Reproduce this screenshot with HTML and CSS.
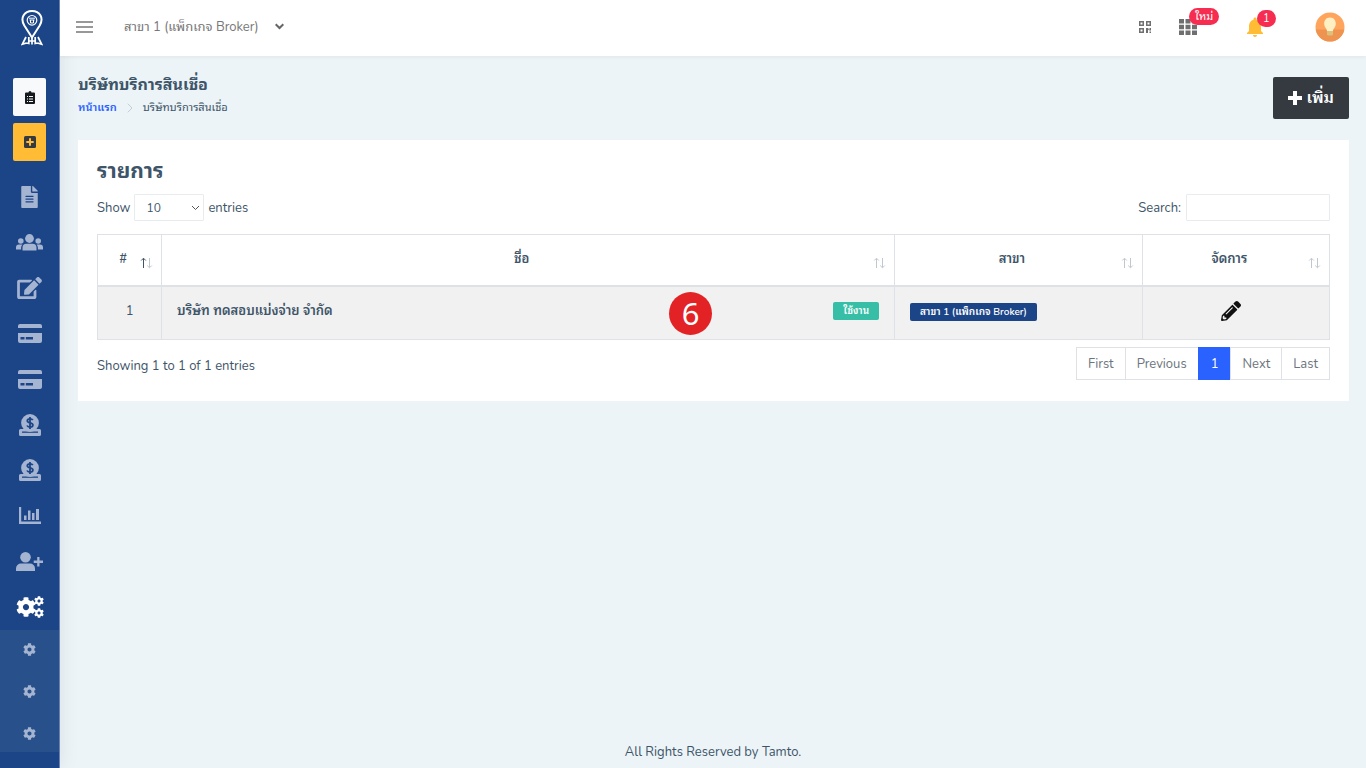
FILE: index.html
```html
<!DOCTYPE html>
<html lang="th">
<head>
<meta charset="utf-8">
<meta name="viewport" content="width=device-width, initial-scale=1">
<title>บริษัทบริการสินเชื่อ</title>
<link rel="stylesheet" href="styles.css">
</head>
<body>
<svg class="sprite" aria-hidden="true">
  <symbol id="cog" viewBox="0 0 512 512"><path d="M487.4 315.7l-42.6-24.6c4.3-23.2 4.3-47 0-70.2l42.6-24.6c4.9-2.8 7.1-8.6 5.5-14-11.1-35.6-30-67.8-54.7-94.6-3.8-4.1-10-5.1-14.8-2.3L380.8 110c-17.9-15.4-38.5-27.3-60.8-35.1V25.8c0-5.6-3.9-10.5-9.4-11.7-36.7-8.2-74.3-7.8-109.2 0-5.5 1.2-9.4 6.1-9.4 11.7V75c-22.2 7.9-42.8 19.8-60.8 35.1L88.7 85.5c-4.9-2.8-11-1.9-14.8 2.3-24.7 26.7-43.6 58.9-54.7 94.6-1.7 5.4.6 11.2 5.5 14L67.3 221c-4.3 23.2-4.3 47 0 70.2l-42.6 24.6c-4.9 2.8-7.1 8.6-5.5 14 11.1 35.6 30 67.8 54.7 94.6 3.8 4.1 10 5.1 14.8 2.3l42.6-24.6c17.9 15.4 38.5 27.3 60.8 35.1v49.2c0 5.6 3.9 10.5 9.4 11.7 36.7 8.2 74.3 7.8 109.2 0 5.5-1.2 9.4-6.1 9.4-11.7v-49.2c22.2-7.9 42.8-19.8 60.8-35.1l42.6 24.6c4.9 2.8 11 1.9 14.8-2.3 24.7-26.7 43.6-58.9 54.7-94.6 1.5-5.5-.7-11.3-5.6-14.1zM256 336c-44.1 0-80-35.9-80-80s35.9-80 80-80 80 35.9 80 80-35.9 80-80 80z"/></symbol>
  <symbol id="card" viewBox="0 0 24 19"><path fill-rule="evenodd" d="M2 0h20a2 2 0 0 1 2 2v2H0V2a2 2 0 0 1 2-2zM0 9h24v8a2 2 0 0 1-2 2H2a2 2 0 0 1-2-2zm2.500 4v2.500h4V13zm5.300 0v2.500H15V13z"/></symbol>
  <symbol id="coin" viewBox="0 0 22 22"><path d="M1.500 15h19a1.500 1.500 0 0 1 1.500 1.500v4a1.500 1.500 0 0 1-1.500 1.500h-19A1.500 1.500 0 0 1 0 20.500v-4A1.500 1.500 0 0 1 1.500 15z"/><path class="cut" d="M3 17.500h16v1.300H3z"/><circle cx="11" cy="9" r="8.900"/><path class="cut-line" d="M13.800 6.200c-.5-1-1.600-1.400-2.800-1.400-1.500 0-2.700.8-2.700 2 0 2.800 5.600 1.300 5.600 4.200 0 1.400-1.300 2.100-2.900 2.100-1.400 0-2.500-.5-3-1.600M11 3v12"/></symbol>
  <symbol id="sort" viewBox="0 0 14 12"><path class="up" d="M3.500 11V1.500M1.200 3.500l2.300-2.300 2.300 2.300"/><path class="down" d="M9.500 1v9.500M7.200 8.500l2.300 2.300 2.300-2.300"/></symbol>
</svg>

<div class="app">
  <aside class="sidebar">
    <a class="brand" href="#" aria-label="Tamto">
      <svg width="22" height="36" viewBox="0 0 22 36" fill="none" stroke="#fff"><path stroke-width="2" d="M11 27.500 3.300 15.500C1 11.500.8 8.500 2.500 5.600 6-.5 16-.5 19.500 5.600c1.700 2.900 1.500 5.900-.8 9.900z"/><circle cx="11" cy="10.300" r="4.800" stroke-width="1.200"/><path stroke-width="1" d="M8 8.200h6M8.500 10h5M9.500 10v3h3v-3"/><path stroke-width="1.700" d="M5 27 1.300 34.300 5.500 33M17 27l3.700 7.300-4.200-1.300M7.800 27v6.500l-2.300-.5M14.200 27v6.500l2.300-.5M8 31h6M11 28v6.500"/></svg>
    </a>
    <div class="quick">
      <button class="quick-btn light" aria-label="รายการ"><svg width="10" height="13" viewBox="0 0 10 13"><path fill="#16191d" d="M1 1.500h2.500a1.500 1.500 0 0 1 3 0H9a1 1 0 0 1 1 1V12a1 1 0 0 1-1 1H1a1 1 0 0 1-1-1V2.500a1 1 0 0 1 1-1z"/><path stroke="#f8f9fa" stroke-width="1" d="M2 5.500h1M4 5.500h4M2 8h1M4 8h4M2 10.500h1M4 10.500h4"/></svg></button>
      <button class="quick-btn amber" aria-label="เพิ่มรายการ"><svg width="12" height="12" viewBox="0 0 12 12"><rect width="12" height="12" rx="1.500" fill="#343a40"/><path stroke="#ffbc34" stroke-width="2" d="M6 2.300v7.400M2.300 6h7.400"/></svg></button>
    </div>
    <nav class="menu">
      <a href="#" aria-label="เอกสาร"><svg width="17" height="22" viewBox="0 0 384 512"><path d="M224 136V0H24C10.700 0 0 10.700 0 24v464c0 13.300 10.700 24 24 24h336c13.300 0 24-10.700 24-24V160H248c-13.200 0-24-10.800-24-24zm64 236c0 6.600-5.400 12-12 12H108c-6.600 0-12-5.400-12-12v-8c0-6.600 5.400-12 12-12h168c6.600 0 12 5.400 12 12v8zm0-64c0 6.600-5.400 12-12 12H108c-6.600 0-12-5.400-12-12v-8c0-6.600 5.400-12 12-12h168c6.600 0 12 5.400 12 12v8zm0-72v8c0 6.600-5.400 12-12 12H108c-6.600 0-12-5.400-12-12v-8c0-6.600 5.400-12 12-12h168c6.600 0 12 5.400 12 12zm96-114.100v6.100H256V0h6.100c6.400 0 12.500 2.500 17 7l97.900 98c4.500 4.500 7 10.600 7 16.900z"/></svg></a>
      <a href="#" aria-label="ลูกค้า"><svg width="27" height="17" viewBox="0 0 27 17"><circle cx="13.500" cy="4.500" r="4.400"/><circle cx="4.800" cy="7" r="2.800"/><circle cx="22.200" cy="7" r="2.800"/><path d="M6.500 16.500v-2.700a4 4 0 0 1 4-4h6a4 4 0 0 1 4 4v2.700zM0 15.500v-2a3 3 0 0 1 3-3h3.500c-.9 1-1.400 2.200-1.400 3.500v1.500zM27 15.500v-2a3 3 0 0 0-3-3h-3.500c.9 1 1.400 2.200 1.400 3.500v1.500z"/></svg></a>
      <a href="#" aria-label="แก้ไข"><svg width="25" height="22" viewBox="0 0 576 512"><path d="M402.600 83.200l90.200 90.200c3.800 3.800 3.800 10 0 13.800L274.400 405.600l-92.800 10.300c-12.400 1.400-22.900-9.100-21.500-21.500l10.300-92.800L388.800 83.200c3.800-3.800 10-3.800 13.800 0zm162-22.900l-48.800-48.800c-15.200-15.200-39.900-15.200-55.200 0l-35.400 35.400c-3.800 3.800-3.800 10 0 13.800l90.200 90.200c3.800 3.800 10 3.800 13.800 0l35.400-35.400c15.200-15.300 15.200-40 0-55.200zM384 346.200V448H64V128h229.800c3.200 0 6.200-1.300 8.500-3.500l40-40c7.600-7.600 2.200-20.500-8.500-20.500H48C21.500 64 0 85.500 0 112v352c0 26.500 21.500 48 48 48h352c26.500 0 48-21.500 48-48V306.200c0-10.700-12.900-16-20.500-8.500l-40 40c-2.200 2.300-3.500 5.300-3.500 8.500z"/></svg></a>
      <a href="#" aria-label="บัตร"><svg width="24" height="19"><use href="#card"/></svg></a>
      <a href="#" aria-label="การชำระ"><svg width="24" height="19"><use href="#card"/></svg></a>
      <a href="#" aria-label="รายรับ"><svg width="22" height="22"><use href="#coin"/></svg></a>
      <a href="#" aria-label="รายจ่าย"><svg width="22" height="22"><use href="#coin"/></svg></a>
      <a href="#" aria-label="รายงาน"><svg width="22" height="17" viewBox="0 0 22 17"><path d="M0 0h2.200v14.500H22V17H0zM5 8.500h2.500v4.500H5zM9 3.500h2.500V13H9zM13 6h2.500v7H13zM17 2h3v11h-3z"/></svg></a>
      <a href="#" aria-label="เพิ่มผู้ใช้"><svg width="27" height="19" viewBox="0 0 27 19"><circle cx="9.500" cy="5.300" r="5.300"/><path d="M0 19v-2.500a5 5 0 0 1 5-5h9a5 5 0 0 1 5 5V19zM21.200 5h2.300v3.600H27V11h-3.500v3.500h-2.300V11h-3.500V8.600h3.500z"/></svg></a>
      <a class="active" href="#" aria-label="ตั้งค่า"><svg width="28" height="22" viewBox="0 0 28 22"><use href="#cog" x="0" y="1" width="20" height="20"/><use href="#cog" x="18" y="0" width="10" height="10"/><use href="#cog" x="18" y="12" width="10" height="10"/></svg></a>
    </nav>
    <nav class="submenu">
      <a href="#" aria-label="ตั้งค่า 1"><svg width="13" height="13"><use href="#cog"/></svg></a>
      <a href="#" aria-label="ตั้งค่า 2"><svg width="13" height="13"><use href="#cog"/></svg></a>
      <a href="#" aria-label="ตั้งค่า 3"><svg width="13" height="13"><use href="#cog"/></svg></a>
    </nav>
  </aside>

  <div class="page">
    <header class="topbar">
      <button class="icon-btn" aria-label="เมนู"><svg width="17" height="12" viewBox="0 0 17 12"><path stroke="#777" stroke-width="1.700" d="M0 1h17M0 6h17M0 11h17"/></svg></button>
      <button class="branch">สาขา 1 (แพ็กเกจ Broker)<svg width="9" height="7" viewBox="0 0 9 7"><path fill="none" stroke="#666" stroke-width="2" d="m.7 1.200 3.800 3.800 3.800-3.800"/></svg></button>
      <div class="tools">
        <button class="icon-btn" aria-label="QR"><svg width="12" height="12" viewBox="0 0 12 12" fill="#6f6f6f"><path fill-rule="evenodd" d="M0 0h5v5H0zm1.500 1.500v2h2v-2zM7 0h5v5H7zm1.500 1.500v2h2v-2zM0 7h5v5H0zm1.500 1.500v2h2v-2zM7 7h2l1.500 2V7H12v2.500h-1.500L9 8.500V12H7z"/><path d="M10.500 10.500H12V12h-1.500z"/></svg></button>
        <button class="icon-btn" aria-label="แอป"><svg width="18" height="16" viewBox="0 0 18 16"><path fill="#6f6f6f" d="M0 0h5v4.500H0zM6.500 0h5v4.500h-5zM13 0h5v4.500h-5zM0 5.800h5v4.400H0zM6.500 5.800h5v4.400h-5zM13 5.800h5v4.400h-5zM0 11.500h5V16H0zM6.500 11.500h5V16h-5zM13 11.500h5V16h-5z"/></svg><span class="pill">ใหม่</span></button>
        <button class="icon-btn bell" aria-label="แจ้งเตือน"><svg width="16" height="20" viewBox="4 2 16 20"><path fill="#ffbc34" d="M12 22c1.100 0 2-.9 2-2h-4a2 2 0 0 0 2 2zm6-6v-5c0-3.070-1.640-5.640-4.500-6.320V4c0-.83-.67-1.500-1.500-1.500s-1.500.67-1.500 1.500v.68C7.630 5.360 6 7.920 6 11v5l-2 2v1h16v-1l-2-2z"/></svg><span class="pill">1</span></button>
        <button class="icon-btn" aria-label="บัญชี"><svg width="30" height="30" viewBox="0 0 30 30"><circle cx="15" cy="15" r="14.500" fill="#ffa45c"/><path fill="#ee9350" d="M.7 17.500h28.600a14.500 14.500 0 0 1-28.600 0z"/><path fill="#fff0c4" d="M15 5.500c4 0 5.800 3 5.800 6.200 0 3.500-2.600 4.600-2.800 7.300h-6c-.2-2.700-2.800-3.800-2.800-7.300 0-3.200 1.800-6.200 5.800-6.200z"/><path fill="#dcc07c" d="M12 19h6v3.500l-1 1h-4l-1-1z"/></svg></button>
      </div>
    </header>

    <main class="content">
      <div class="heading">
        <div>
          <h1>บริษัทบริการสินเชื่อ</h1>
          <nav class="crumbs"><a href="#">หน้าแรก</a><svg width="6" height="10" viewBox="0 0 6 10"><path fill="none" stroke="#c3cdd4" d="m.8.700 4.200 4.300-4.200 4.300"/></svg><span>บริษัทบริการสินเชื่อ</span></nav>
        </div>
        <button class="add"><svg width="14" height="14" viewBox="0 0 14 14"><path fill="#fff" d="M5 0h4v5h5v4H9v5H5V9H0V5h5z"/></svg>เพิ่ม</button>
      </div>

      <section class="panel">
        <h2>รายการ</h2>
        <div class="controls">
          <label>Show <select><option>10</option><option>25</option></select> entries</label>
          <label>Search: <input type="search"></label>
        </div>
        <table>
          <colgroup><col class="c-no"><col class="c-name"><col class="c-branch"><col class="c-act"></colgroup>
          <thead><tr>
            <th class="asc">#<svg class="sort" width="14" height="12"><use href="#sort"/></svg></th>
            <th>ชื่อ<svg class="sort" width="14" height="12"><use href="#sort"/></svg></th>
            <th>สาขา<svg class="sort" width="14" height="12"><use href="#sort"/></svg></th>
            <th>จัดการ<svg class="sort" width="14" height="12"><use href="#sort"/></svg></th>
          </tr></thead>
          <tbody><tr>
            <td class="center">1</td>
            <td><div class="name">บริษัท ทดสอบแบ่งจ่าย จำกัด<span class="tag green">ใช้งาน</span></div><span class="step">6</span></td>
            <td><span class="tag navy">สาขา 1 (แพ็กเกจ Broker)</span></td>
            <td class="center action"><button class="icon-btn edit" aria-label="แก้ไข"><svg width="20" height="20" viewBox="0 0 512 512"><path fill="#111" d="M497.900 142.100l-46.100 46.100c-4.700 4.700-12.300 4.700-17 0l-111-111c-4.700-4.700-4.700-12.300 0-17l46.100-46.100c18.700-18.700 49.100-18.700 67.900 0l60.100 60.100c18.800 18.700 18.800 49.100 0 67.900zM284.200 99.800L21.600 362.400.4 483.900c-2.900 16.400 11.400 30.600 27.800 27.800l121.500-21.300 262.600-262.600c4.700-4.700 4.700-12.300 0-17l-111-111c-4.800-4.700-12.400-4.700-17.100 0zM124.100 339.900c-5.500-5.500-5.500-14.300 0-19.800l154-154c5.500-5.500 14.300-5.500 19.800 0s5.500 14.300 0 19.800l-154 154c-5.500 5.500-14.300 5.500-19.800 0zM88 424h48v36.300l-64.500 11.300-31.100-31.100L51.700 376H88v48z"/></svg></button></td>
          </tr></tbody>
        </table>
        <div class="foot">
          <span>Showing 1 to 1 of 1 entries</span>
          <div class="pager"><button>First</button><button>Previous</button><button class="current">1</button><button>Next</button><button>Last</button></div>
        </div>
      </section>
    </main>
    <footer>All Rights Reserved by Tamto.</footer>
  </div>
</div>
</body>
</html>
```
FILE: styles.css
```css
* { box-sizing: border-box; }
body {
  margin: 0;
  background: #ecf4f7;
  color: #3e5569;
  font: 13px/20px Nunito, "Noto Sans Thai Looped", "Sarabun", "Garuda", "Umpush", "Laksaman", "Waree", "Norasi", "Loma", "Noto Sans Thai", sans-serif;
}
button, input, select { font: inherit; color: inherit; }
button { border: 0; background: none; padding: 0; cursor: pointer; }
a { color: inherit; text-decoration: none; }
h1, h2 { margin: 0; font-weight: 700; }
svg { display: block; flex: none; }
.sprite { position: absolute; width: 0; height: 0; }

.app { display: flex; min-height: 100vh; }
.sidebar {
  flex: none;
  width: 60px;
  background: #1c4587;
  border-right: 1px solid #6983b0;
  box-shadow: 1px 0 20px rgba(0, 0, 0, 0.08);
}
.brand { display: flex; justify-content: center; height: 78px; padding: 10px 0 0 4px; }
.quick { display: grid; gap: 7px; justify-content: center; }
.quick-btn {
  display: grid;
  place-items: center;
  width: 33px;
  height: 38px;
  border-radius: 2px;
}
.light { background: #f8f9fa; }
.amber { background: #ffbc34; }
.menu { display: grid; grid-auto-rows: 1fr; height: 456px; margin-top: 13px; }
.menu a, .submenu a { display: grid; place-items: center; fill: #a5b4d1; }
.menu .active { fill: #fff; }
.cut { fill: #1c4587; }
.cut-line { fill: none; stroke: #1c4587; stroke-width: 1.8; }
.submenu { display: grid; grid-auto-rows: 38px; gap: 4px; background: #28508b; }

.page { display: flex; flex: 1; flex-direction: column; min-width: 0; }
.topbar {
  display: flex;
  align-items: center;
  height: 56px;
  padding: 0 21px 3px 16px;
  background: #fff;
  box-shadow: 0 1px 4px rgba(0, 0, 0, 0.06);
}
.branch { display: flex; align-items: center; gap: 16px; margin-left: 31px; color: #777; }
.tools { display: flex; align-items: center; gap: 28px; margin-left: auto; }
.icon-btn { position: relative; }
.bell { margin: 0 24px 0 22px; }
.pill {
  position: absolute;
  left: 10px;
  bottom: 10px;
  padding: 0 6px;
  border-radius: 9px;
  background: #f62d51;
  color: #fff;
  font-size: 11px;
  line-height: 17px;
}

.content { flex: 1; padding: 18px 17px 0 18px; }
.heading { display: flex; justify-content: space-between; align-items: flex-start; height: 66px; }
h1 { font-size: 16px; line-height: 22px; }
.crumbs { display: flex; align-items: center; gap: 10px; padding-top: 2px; font-size: 11px; }
.crumbs a { color: #2962ff; font-weight: 600; }
.add {
  display: flex;
  align-items: center;
  gap: 5px;
  height: 42px;
  margin-top: 3px;
  padding: 0 15px;
  border-radius: 2px;
  background: #343a40;
  color: #fff;
  font-size: 16px;
  font-weight: 600;
}
.panel { padding: 18px 19px 21px; background: #fff; }
h2 { font-size: 21px; line-height: 26px; }
.controls { display: flex; justify-content: space-between; padding: 10px 0 13px; }
.controls label { display: flex; align-items: center; gap: 4px; }
.controls select {
  appearance: none;
  width: 70px;
  height: 27px;
  padding: 0 11px;
  border: 1px solid #e9ecef;
  border-radius: 1px;
  background: #fff url("data:image/svg+xml,%3Csvg xmlns='http://www.w3.org/2000/svg' width='9' height='6'%3E%3Cpath d='m1 1 3.500 3.500L8 1' fill='none' stroke='%23555'/%3E%3C/svg%3E") no-repeat right 3px center;
  font-size: 12px;
}
.controls input { width: 144px; height: 27px; margin-left: 1px; border: 1px solid #e9ecef; border-radius: 1px; }
table { width: 100%; border-collapse: collapse; table-layout: fixed; }
.c-no { width: 5.2%; }
.c-name { width: 59.5%; }
.c-branch { width: 20.1%; }
.c-act { width: 15.2%; }
th, td { position: relative; border: 1px solid #dee2e6; padding: 0 15px; text-align: left; }
th { height: 51px; padding: 0 28px 1px 15px; border-bottom: 2px solid #dee2e6; font-weight: 600; text-align: center; }
td { height: 54px; padding-bottom: 4px; background: #f1f1f1; }
.center { text-align: center; }
.action { padding-right: 25px; }
.sort { position: absolute; right: 7px; bottom: 16px; fill: none; stroke: #c0c8cf; }
.asc .sort { --up: #3e5569; }
.up { stroke: var(--up, #c0c8cf); }
.name { display: flex; justify-content: space-between; font-weight: 600; }
.tag { display: inline-block; padding: 0 10px; border-radius: 2px; color: #fff; font-size: 10px; line-height: 18px; font-weight: 600; }
.green { align-self: center; background: #36bea6; }
.navy { background: #1c4587; }
.edit svg { display: inline-block; vertical-align: middle; }
.step {
  position: absolute;
  top: 5px;
  right: 182px;
  width: 43px;
  height: 43px;
  border-radius: 50%;
  background: #e32225;
  color: #fff;
  font: 31px/42px "Noto Sans", sans-serif;
  text-align: center;
}
.foot { display: flex; justify-content: space-between; align-items: center; padding-top: 7px; }
.foot span { padding-top: 4px; }
.pager { display: flex; color: #6c757d; }
.pager button { height: 33px; padding: 0 11px; border: 1px solid #dee2e6; margin-left: -1px; }
.pager .current { padding: 0 12px; background: #2962ff; border-color: #2962ff; color: #fff; }
footer { padding: 0 0 6px; text-align: center; }
```
